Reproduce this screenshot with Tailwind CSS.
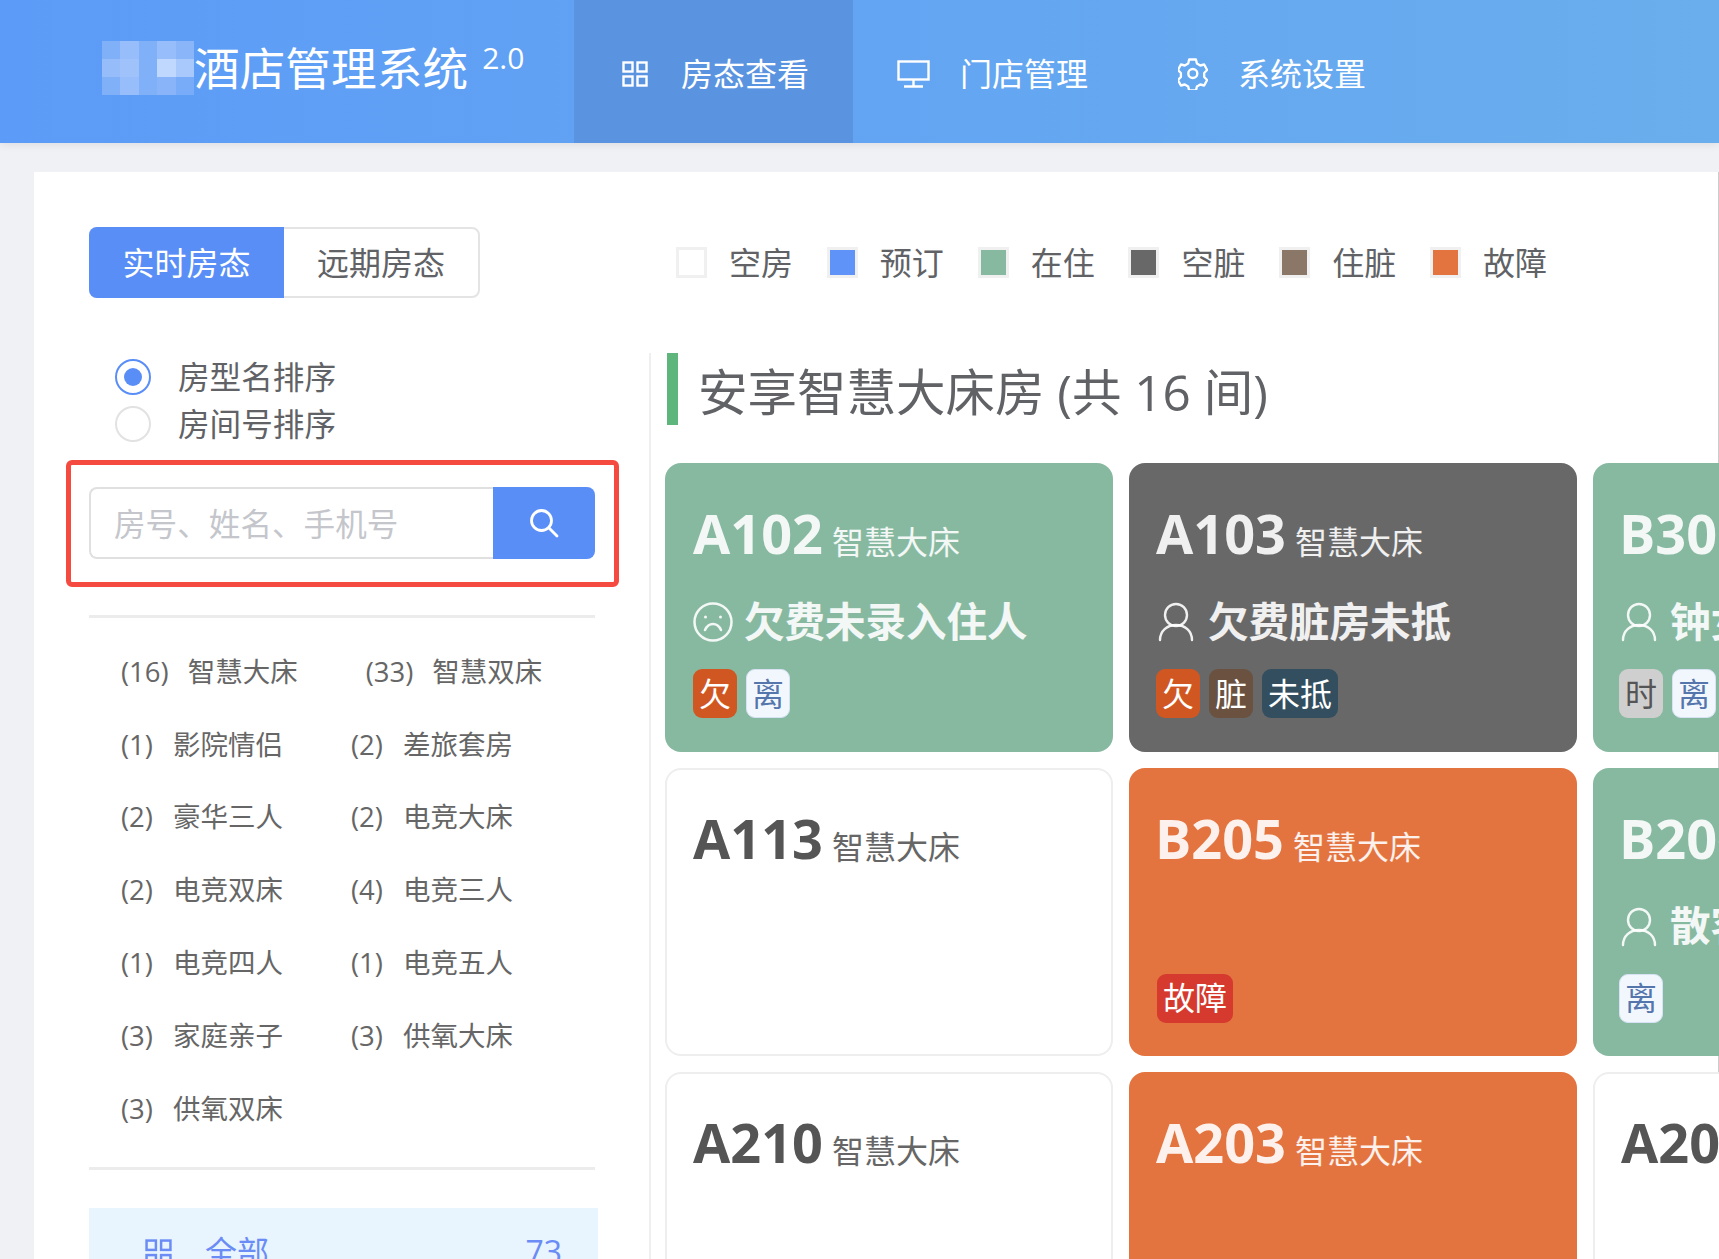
<!DOCTYPE html>
<html lang="zh-CN">
<head>
    <meta charset="UTF-8">
    <meta name="viewport" content="width=device-width, initial-scale=1.0">
    <title>酒店管理系统</title>
    <script src="https://cdn.jsdelivr.net/npm/@tailwindcss/browser@4"></script>
</head>
<body class="bg-[#f0f1f5] font-['Open_Sans','Noto_Sans_CJK_SC',sans-serif] text-[#606266]">
<div class="w-[1719px] h-[1259px] overflow-hidden flex flex-col">
    <!-- header -->
    <header class="h-[143px] shrink-0 flex text-white bg-gradient-to-r from-[#5c9bf7] to-[#6aaeed] shadow-[0_2px_8px_rgba(0,0,0,0.08)]">
        <div class="w-[574px] pl-[102px] flex items-start">
            <div class="mt-[41px] w-[92px] h-[54px] grid grid-cols-5 grid-rows-3 shrink-0">
                <div class="bg-[#7fb0f8]"></div><div class="bg-[#97bdfa]"></div><div class="bg-[#7fb0f8]"></div><div class="bg-[#97bdfa]"></div><div class="bg-[#8ab5f8]"></div>
                <div class="bg-[#97bcfa]"></div><div class="bg-[#a0c2fb]"></div><div class="bg-[#80b0f8]"></div><div class="bg-[#c0d8fd]"></div><div class="bg-[#a9c8fb]"></div>
                <div class="bg-[#7fb0f8]"></div><div class="bg-[#97bdfa]"></div><div class="bg-[#80b0f8]"></div><div class="bg-[#8ab4f9]"></div><div class="bg-[#79acf8]"></div>
            </div>
            <span class="mt-[36px] text-[45.700px] leading-[64px] whitespace-nowrap">酒店管理系统</span>
            <span class="ml-[14px] mt-[38px] text-[30px] leading-[40px]">2.0</span>
        </div>
        <a class="w-[279px] pl-[48px] pt-[5px] flex items-center gap-[33px] bg-[#5a94e0] text-[32px]">
            <svg class="w-[26px] h-[26px] shrink-0" viewBox="0 0 26 26" fill="none" stroke="currentColor" stroke-width="2.4"><rect x="1.5" y="1.5" width="9" height="9"/><rect x="15.5" y="1.5" width="9" height="9"/><rect x="1.5" y="15.5" width="9" height="9"/><rect x="15.500" y="15.500" width="9" height="9"/></svg>
            <span>房态查看</span>
        </a>
        <a class="w-[279px] pl-[44px] pt-[5px] flex items-center gap-[30px] text-[32px]">
            <svg class="w-[33px] h-[28px] shrink-0" viewBox="0 0 33 28" fill="none" stroke="currentColor" stroke-width="2.4"><rect x="1.5" y="1.5" width="30" height="18"/><path d="M16.5 20v6M7 26.5h19"/></svg>
            <span>门店管理</span>
        </a>
        <a class="pl-[46px] pt-[5px] flex items-center gap-[30px] text-[32px]">
            <svg class="w-[30px] h-[32px] shrink-0" viewBox="0 0 30 32" fill="none" stroke="currentColor" stroke-width="2.4" stroke-linejoin="round"><path d="M11.5 2h7l1 4 3.5 2 4-1 3 5.500-3 3 0 4 3 3-3 5.500-4-1-3.500 2-1 4h-7l-1-4-3.500-2-4 1-3-5.500 3-3 0-4-3-3 3-5.500 4 1 3.500-2z" transform="translate(0 -0.500) scale(0.97 1)"/><circle cx="14.800" cy="15.500" r="4.500"/></svg>
            <span>系统设置</span>
        </a>
    </header>

    <main class="flex-1 mt-[29px] ml-[34px] bg-white pl-[55px] pt-[55px] border-r border-[#ccc]">
        <!-- tabs + legend -->
        <div class="flex items-center h-[71px]">
            <div class="flex w-[391px] h-[71px] text-[32px] rounded-[8px] border-2 border-[#e4e4e4]">
                <div class="w-[195px] -m-[2px] mr-0 bg-[#5a8ef7] text-white rounded-l-[8px] flex items-center justify-center">实时房态</div>
                <div class="flex-1 flex items-center justify-center">远期房态</div>
            </div>
            <div class="ml-[196px] flex items-center text-[32px]">
                <div class="w-[31px] h-[31px] border-[3px] border-[#f0f0f0] bg-white"></div><span class="ml-[22px] mr-[33.800px]">空房</span>
                <div class="w-[31px] h-[31px] border-[3px] border-[#f0f0f0] bg-[#5f93f8]"></div><span class="ml-[22px] mr-[33.800px]">预订</span>
                <div class="w-[31px] h-[31px] border-[3px] border-[#f0f0f0] bg-[#87b9a1]"></div><span class="ml-[22px] mr-[33.800px]">在住</span>
                <div class="w-[31px] h-[31px] border-[3px] border-[#f0f0f0] bg-[#686868]"></div><span class="ml-[22px] mr-[33.800px]">空脏</span>
                <div class="w-[31px] h-[31px] border-[3px] border-[#f0f0f0] bg-[#8b7767]"></div><span class="ml-[22px] mr-[33.800px]">住脏</span>
                <div class="w-[31px] h-[31px] border-[3px] border-[#f0f0f0] bg-[#e4743f]"></div><span class="ml-[22px]">故障</span>
            </div>
        </div>

        <div class="flex mt-[55px]">
            <!-- sidebar -->
            <aside class="w-[506px] shrink-0">
                <div class="pl-[26px] text-[31.600px]">
                    <div class="h-[47px] flex items-center gap-[27px]">
                        <span class="w-[36px] h-[36px] rounded-full border-2 border-[#5a8ef7] flex items-center justify-center"><span class="w-[18px] h-[18px] rounded-full bg-[#5a8ef7]"></span></span>
                        <span>房型名排序</span>
                    </div>
                    <div class="h-[47px] flex items-center gap-[27px]">
                        <span class="w-[36px] h-[36px] rounded-full border-2 border-[#e2e2e2]"></span>
                        <span>房间号排序</span>
                    </div>
                </div>

                <div class="relative mt-[40px] flex h-[72px]">
                    <div class="flex-1 border-2 border-r-0 border-[#e0e0e0] rounded-l-[8px] pl-[23px] pt-[1px] flex items-center text-[31.600px] text-[#c4c6cc]">房号、姓名、手机号</div>
                    <div class="w-[102px] bg-[#5a8ef7] rounded-r-[8px] flex items-center justify-center">
                        <svg class="w-[30px] h-[30px] text-white" viewBox="0 0 30 30" fill="none" stroke="currentColor" stroke-width="2.800" stroke-linecap="round"><circle cx="12.500" cy="12.500" r="10"/><path d="M20 20l8 8"/></svg>
                    </div>
                    <div class="absolute -left-[23px] -top-[27px] w-[553px] h-[127px] border-[5px] border-[#f44a3f] rounded-[6px]"></div>
                </div>

                <div class="mt-[56px] h-[3px] bg-[#ececec]"></div>

                <div class="mt-[17px] -ml-[2px] flex flex-wrap text-[27.500px] text-[#666]">
                    <span class="h-[72.800px] flex items-center px-[34px] whitespace-nowrap">(16)<span class="ml-[19px]">智慧大床</span></span>
                    <span class="h-[72.800px] flex items-center px-[34px] whitespace-nowrap">(33)<span class="ml-[19px]">智慧双床</span></span>
                    <span class="h-[72.800px] flex items-center px-[34px] whitespace-nowrap">(1)<span class="ml-[20px]">影院情侣</span></span>
                    <span class="h-[72.800px] flex items-center px-[34px] whitespace-nowrap">(2)<span class="ml-[20px]">差旅套房</span></span>
                    <span class="h-[72.800px] flex items-center px-[34px] whitespace-nowrap">(2)<span class="ml-[20px]">豪华三人</span></span>
                    <span class="h-[72.800px] flex items-center px-[34px] whitespace-nowrap">(2)<span class="ml-[20px]">电竞大床</span></span>
                    <span class="h-[72.800px] flex items-center px-[34px] whitespace-nowrap">(2)<span class="ml-[20px]">电竞双床</span></span>
                    <span class="h-[72.800px] flex items-center px-[34px] whitespace-nowrap">(4)<span class="ml-[20px]">电竞三人</span></span>
                    <span class="h-[72.800px] flex items-center px-[34px] whitespace-nowrap">(1)<span class="ml-[20px]">电竞四人</span></span>
                    <span class="h-[72.800px] flex items-center px-[34px] whitespace-nowrap">(1)<span class="ml-[20px]">电竞五人</span></span>
                    <span class="h-[72.800px] flex items-center px-[34px] whitespace-nowrap">(3)<span class="ml-[20px]">家庭亲子</span></span>
                    <span class="h-[72.800px] flex items-center px-[34px] whitespace-nowrap">(3)<span class="ml-[20px]">供氧大床</span></span>
                    <span class="h-[72.800px] flex items-center px-[34px] whitespace-nowrap">(3)<span class="ml-[20px]">供氧双床</span></span>
                </div>

                <div class="mt-[22px] h-[3px] bg-[#ececec]"></div>

                <div class="mt-[38px] w-[509px] h-[84px] pt-[5px] bg-[#e8f5ff] flex items-center pl-[56px] pr-[36px] text-[32px] text-[#6b8cf5]">
                    <svg class="w-[27px] h-[27px] shrink-0" viewBox="0 0 26 26" fill="none" stroke="currentColor" stroke-width="2.400"><rect x="1.500" y="1.500" width="9" height="9"/><rect x="15.500" y="1.500" width="9" height="9"/><rect x="1.500" y="15.500" width="9" height="9"/><rect x="15.500" y="15.500" width="9" height="9"/></svg>
                    <span class="ml-[33px]">全部</span>
                    <span class="ml-auto">73</span>
                </div>
            </aside>

            <!-- rooms -->
            <section class="ml-[54px] pl-[14px] border-l-2 border-[#efefef]">
                <div class="flex items-center h-[72px] ml-[2px]">
                    <div class="w-[11px] h-[72px] bg-[#5fb67c]"></div>
                    <h2 class="ml-[20px] mt-[6px] text-[49.500px] whitespace-nowrap">安享智慧大床房 (共 16 间)</h2>
                </div>

                <div class="mt-[38px] grid grid-cols-[448px_448px_448px] auto-rows-[288.500px] gap-x-[16px] gap-y-[16px] w-[1400px]">
                    <!-- row 1 -->
                    <div class="rounded-[16px] bg-[#87b9a1] text-white/90 px-[28px] pt-[38px]">
                        <div class="flex items-baseline h-[64px]"><span class="text-[54px] leading-[64px] font-bold">A102</span><span class="ml-[9px] text-[32px]">智慧大床</span></div>
                        <div class="mt-[32px] h-[50px] flex items-center gap-[11px] text-[40.500px] font-bold">
                            <svg class="w-[40px] h-[40px] shrink-0" viewBox="0 0 40 40" fill="none" stroke="currentColor" stroke-width="2.500" stroke-linecap="round"><circle cx="20" cy="20" r="18.500"/><path d="M12 28c2-4.500 5-6 8-6s6 1.500 8 6"/><circle cx="12.500" cy="15" r="1.500" fill="currentColor" stroke="none"/><circle cx="27.500" cy="15" r="1.500" fill="currentColor" stroke="none"/></svg>
                            <span>欠费未录入住人</span>
                        </div>
                        <div class="mt-[22px] flex gap-[9px] text-[32px]">
                            <span class="h-[49px] px-[6px] rounded-[9px] bg-[#d15722] text-white flex items-center">欠</span>
                            <span class="h-[49px] px-[5px] rounded-[9px] bg-[#f2f7fd] border border-[#d7e2f5] text-[#5576ad] flex items-center">离</span>
                        </div>
                    </div>
                    <div class="rounded-[16px] bg-[#686868] text-white/90 px-[27px] pt-[38px]">
                        <div class="flex items-baseline h-[64px]"><span class="text-[54px] leading-[64px] font-bold">A103</span><span class="ml-[9px] text-[32px]">智慧大床</span></div>
                        <div class="mt-[32px] h-[50px] flex items-center gap-[12px] text-[40.500px] font-bold">
                            <svg class="w-[40px] h-[40px] shrink-0" viewBox="0 0 40 40" fill="none" stroke="currentColor" stroke-width="2.400" stroke-linecap="round"><circle cx="20" cy="13" r="11"/><path d="M4 38c0-9 7-15 16-15s16 6 16 15"/></svg>
                            <span>欠费脏房未抵</span>
                        </div>
                        <div class="mt-[22px] flex gap-[9px] text-[32px]">
                            <span class="h-[49px] px-[6px] rounded-[9px] bg-[#d15722] text-white flex items-center">欠</span>
                            <span class="h-[49px] px-[6px] rounded-[9px] bg-[#6a5140] text-white flex items-center">脏</span>
                            <span class="h-[49px] px-[6px] rounded-[9px] bg-[#334f5f] text-white flex items-center">未抵</span>
                        </div>
                    </div>
                    <div class="rounded-[16px] bg-[#87b9a1] text-white/90 px-[26px] pt-[38px]">
                        <div class="flex items-baseline h-[64px]"><span class="text-[54px] leading-[64px] font-bold">B301</span><span class="ml-[9px] text-[32px]">智慧大床</span></div>
                        <div class="mt-[32px] h-[50px] flex items-center gap-[11px] text-[40.500px] font-bold">
                            <svg class="w-[40px] h-[40px] shrink-0" viewBox="0 0 40 40" fill="none" stroke="currentColor" stroke-width="2.400" stroke-linecap="round"><circle cx="20" cy="13" r="11"/><path d="M4 38c0-9 7-15 16-15s16 6 16 15"/></svg>
                            <span>钟女士</span>
                        </div>
                        <div class="mt-[22px] flex gap-[9px] text-[32px]">
                            <span class="h-[49px] px-[6px] rounded-[9px] bg-[#cfcfcf] text-[#555] flex items-center">时</span>
                            <span class="h-[49px] px-[5px] rounded-[9px] bg-[#f2f7fd] border border-[#d7e2f5] text-[#5576ad] flex items-center">离</span>
                        </div>
                    </div>
                    <!-- row 2 -->
                    <div class="rounded-[16px] bg-white border-2 border-[#eeeeee] text-[#555] px-[26px] pt-[36px]">
                        <div class="flex items-baseline h-[64px]"><span class="text-[54px] leading-[64px] font-bold">A113</span><span class="ml-[9px] text-[32px] text-[#666]">智慧大床</span></div>
                    </div>
                    <div class="rounded-[16px] bg-[#e4743f] text-white/90 px-[28px] pt-[38px]">
                        <div class="flex items-baseline h-[64px] -ml-[2px]"><span class="text-[54px] leading-[64px] font-bold">B205</span><span class="ml-[9px] text-[32px]">智慧大床</span></div>
                        <div class="mt-[32px] h-[50px]"></div>
                        <div class="mt-[22px] flex gap-[9px] text-[32px]">
                            <span class="h-[49px] px-[6px] rounded-[9px] bg-[#d63a2f] text-white flex items-center">故障</span>
                        </div>
                    </div>
                    <div class="rounded-[16px] bg-[#87b9a1] text-white/90 px-[26px] pt-[38px]">
                        <div class="flex items-baseline h-[64px]"><span class="text-[54px] leading-[64px] font-bold">B206</span><span class="ml-[9px] text-[32px]">智慧大床</span></div>
                        <div class="mt-[32px] h-[50px] flex items-center gap-[11px] text-[40.500px] font-bold">
                            <svg class="w-[40px] h-[40px] shrink-0" viewBox="0 0 40 40" fill="none" stroke="currentColor" stroke-width="2.400" stroke-linecap="round"><circle cx="20" cy="13" r="11"/><path d="M4 38c0-9 7-15 16-15s16 6 16 15"/></svg>
                            <span>散客</span>
                        </div>
                        <div class="mt-[22px] flex gap-[9px] text-[32px]">
                            <span class="h-[49px] px-[5px] rounded-[9px] bg-[#f2f7fd] border border-[#d7e2f5] text-[#5576ad] flex items-center">离</span>
                        </div>
                    </div>
                    <!-- row 3 -->
                    <div class="rounded-[16px] bg-white border-2 border-[#eeeeee] text-[#555] px-[26px] pt-[36px]">
                        <div class="flex items-baseline h-[64px]"><span class="text-[54px] leading-[64px] font-bold">A210</span><span class="ml-[9px] text-[32px] text-[#666]">智慧大床</span></div>
                    </div>
                    <div class="rounded-[16px] bg-[#e4743f] text-white/90 px-[27px] pt-[38px]">
                        <div class="flex items-baseline h-[64px]"><span class="text-[54px] leading-[64px] font-bold">A203</span><span class="ml-[9px] text-[32px]">智慧大床</span></div>
                    </div>
                    <div class="rounded-[16px] bg-white border-2 border-[#eeeeee] text-[#555] px-[26px] pt-[36px]">
                        <div class="flex items-baseline h-[64px]"><span class="text-[54px] leading-[64px] font-bold">A205</span><span class="ml-[9px] text-[32px] text-[#666]">智慧大床</span></div>
                    </div>
                </div>
            </section>
        </div>
    </main>
</div>
</body>
</html>
